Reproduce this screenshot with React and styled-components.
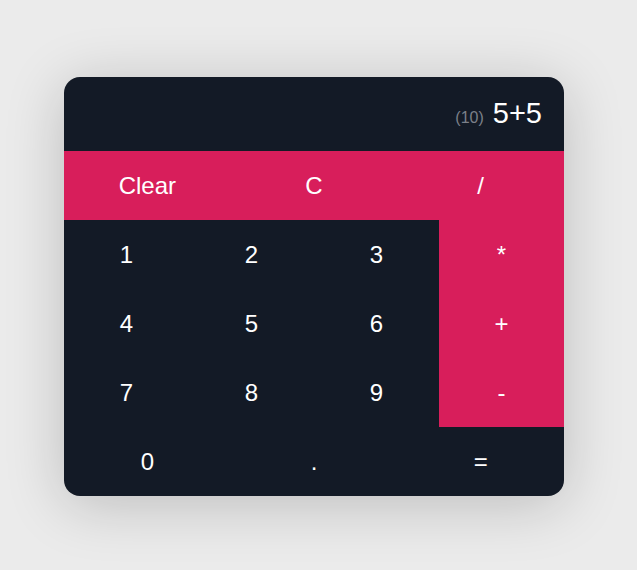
import React from "react";
import styled, { createGlobalStyle } from "styled-components";

const Global = createGlobalStyle`
  html, body { margin: 0; padding: 0; background: #ebebeb; }
  body { font-family: "Liberation Sans", Arial, sans-serif; }
`;

const Page = styled.div`
  width: 637px;
  height: 570px;
  box-sizing: border-box;
  padding: 77px 0 0 64px;
`;

const Card = styled.div`
  width: 500px;
  border-radius: 16px;
  overflow: hidden;
  background: #131a26;
  box-shadow: 0 8px 60px rgba(0, 0, 0, 0.2);
  display: grid;
  grid-template-columns: repeat(12, 1fr);
  grid-template-rows: 74px repeat(5, 69px);
`;

const Display = styled.div`
  grid-column: span 12;
  display: flex;
  justify-content: flex-end;
  align-items: baseline;
  padding: 20px 22px 0 0;
  gap: 9px;
  color: #fff;
  font-size: 29px;
`;

const Prev = styled.span`
  color: #7b8089;
  font-size: 16px;
`;

const Key = styled.button`
  grid-column: span ${(p) => p.$span};
  border: none;
  margin: 0;
  padding: 0;
  background: ${(p) => (p.$accent ? "#d81e5b" : "transparent")};
  color: #fff;
  font-family: "Liberation Sans", Arial, sans-serif;
  font-size: 24px;
  display: flex;
  align-items: center;
  justify-content: center;
  cursor: pointer;
`;

const rows = [
  [["Clear", 4, true], ["C", 4, true], ["/", 4, true]],
  [["1", 3], ["2", 3], ["3", 3], ["*", 3, true]],
  [["4", 3], ["5", 3], ["6", 3], ["+", 3, true]],
  [["7", 3], ["8", 3], ["9", 3], ["-", 3, true]],
  [["0", 4], [".", 4], ["=", 4]],
];

export default function App() {
  return (
    <>
      <Global />
      <Page>
        <Card>
          <Display>
            <Prev>(10)</Prev>
            <span>5+5</span>
          </Display>
          {rows.flat().map(([label, span, accent]) => (
            <Key key={label} $span={span} $accent={accent}>
              {label}
            </Key>
          ))}
        </Card>
      </Page>
    </>
  );
}
